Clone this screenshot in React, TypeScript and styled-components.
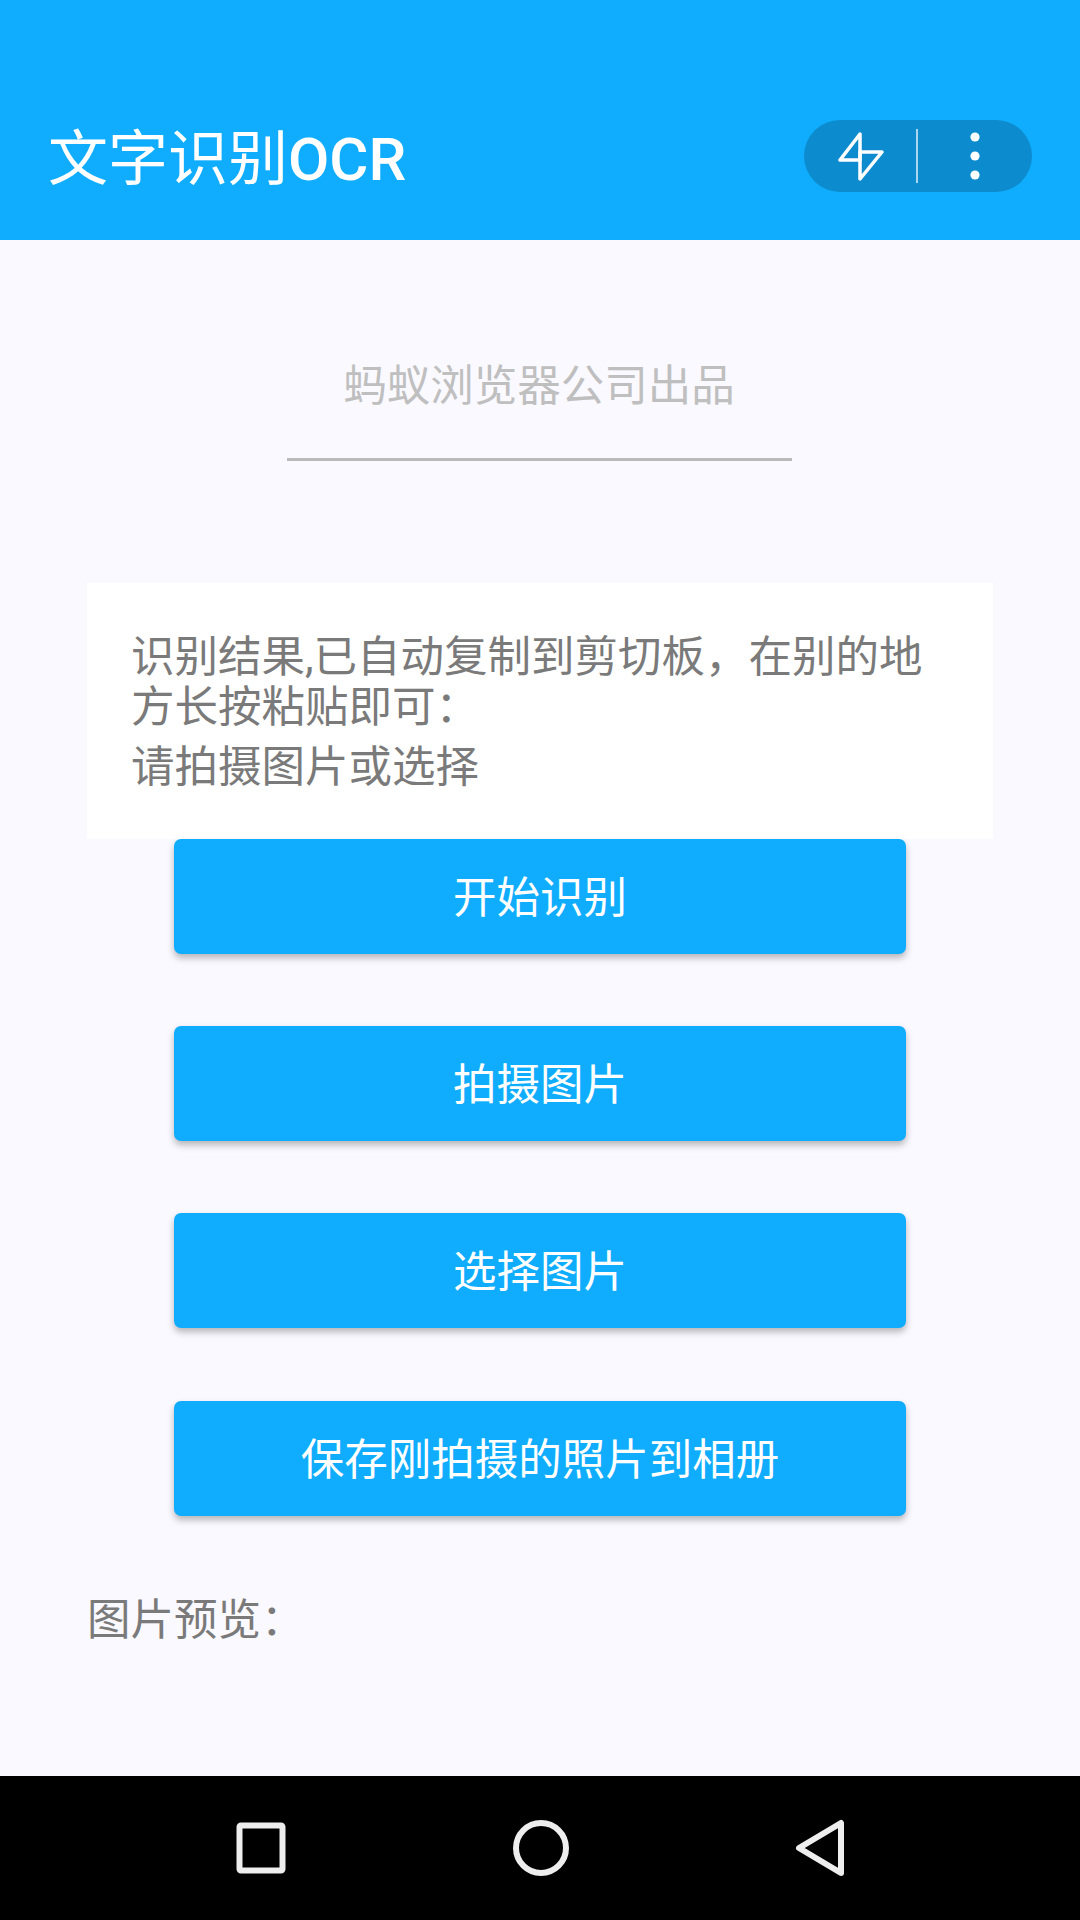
import styled, { createGlobalStyle } from 'styled-components';

const GlobalStyle = createGlobalStyle`
  html, body {
    margin: 0;
    padding: 0;
    background: #faf9ff;
  }
  body {
    font-family: Roboto, "Noto Sans CJK SC", sans-serif;
  }
`;

const Page = styled.div`
  width: 1080px;
  height: 1920px;
  display: flex;
  flex-direction: column;
  overflow: hidden;
`;

const Header = styled.header`
  height: 240px;
  flex: none;
  box-sizing: border-box;
  background: #10adff;
  padding: 120px 48px 0 48px;
  display: flex;
  justify-content: space-between;
  align-items: flex-start;
`;

const Title = styled.h1`
  margin: 0;
  height: 80px;
  font-size: 60px;
  line-height: 80px;
  font-weight: 400;
  color: #fff;
`;

const TitleLatin = styled.span`
  font-weight: 500;
`;

const Capsule = styled.div`
  width: 228px;
  height: 72px;
  border-radius: 36px;
  background: #0d8bcf;
  display: flex;
  align-items: center;
`;

const CapsuleSlot = styled.div`
  flex: 1;
  height: 100%;
  display: flex;
  align-items: center;
  justify-content: center;
`;

const CapsuleDivider = styled.div`
  width: 1.5px;
  height: 54px;
  margin-left: -2px;
  background: rgba(255, 255, 255, 0.65);
`;

const Main = styled.main`
  flex: 1;
  display: flex;
  flex-direction: column;
  align-items: center;
  padding-top: 114px;
`;

const Vendor = styled.div`
  width: 505px;
  height: 107px;
  margin-left: -2px;
  box-sizing: border-box;
  border-bottom: 3px solid #bababa;
  text-align: center;
  font-size: 43.5px;
  line-height: 66px;
  color: #bfbfbf;
`;

const ResultCard = styled.section`
  width: 906px;
  height: 256px;
  margin-top: 122px;
  box-sizing: border-box;
  padding: 50px 44px 0;
  background: #fff;
  color: #7a7a7a;
  font-size: 43.5px;
  line-height: 50px;
`;

const ResultHint = styled.p`
  margin: 0;
`;

const ResultValue = styled.p`
  margin: 10px 0 0;
`;

const ButtonList = styled.div`
  display: flex;
  flex-direction: column;
  gap: 72.2px;
`;

const ActionButton = styled.button`
  width: 732px;
  height: 115px;
  border: 0;
  padding: 0 0 4px;
  border-radius: 7px;
  background: #10adff;
  color: #fff;
  font: inherit;
  font-size: 43.5px;
  box-shadow: 0 4px 7px rgba(0, 0, 0, 0.28);
`;

const PreviewLabel = styled.div`
  align-self: flex-start;
  margin: 75px 0 0 87px;
  font-size: 43.5px;
  line-height: 60px;
  color: #7a7a7a;
`;

const NavBar = styled.nav`
  height: 144px;
  flex: none;
  box-sizing: border-box;
  background: #000;
  display: flex;
  align-items: center;
  justify-content: space-between;
  padding: 0 220px 0 221px;
`;

const NavSlot = styled.div`
  width: 80px;
  height: 60px;
  display: flex;
  align-items: center;
  justify-content: center;
`;

function FlashIcon() {
  return (
    <svg width="46" height="49" viewBox="0 0 46 49" fill="none" stroke="#fff" strokeWidth="3.5" strokeLinejoin="round">
      <path d="M22 2 L2 28 H22 Z" />
      <path d="M22 20 H44 L22 47 Z" />
    </svg>
  );
}

function MoreIcon() {
  return (
    <svg width="12" height="52" viewBox="0 0 12 52" fill="#fff">
      <circle cx="6" cy="7" r="4.6" />
      <circle cx="6" cy="26" r="4.6" />
      <circle cx="6" cy="45" r="4.6" />
    </svg>
  );
}

function SquareIcon() {
  return (
    <svg width="50" height="52" viewBox="0 0 50 52" fill="none" stroke="#eee" strokeWidth="6" strokeLinejoin="round">
      <rect x="3.5" y="3.5" width="43" height="45" rx="1.5" />
    </svg>
  );
}

function CircleIcon() {
  return (
    <svg width="56" height="56" viewBox="0 0 56 56" fill="none" stroke="#eee" strokeWidth="6">
      <circle cx="28" cy="28" r="25" />
    </svg>
  );
}

function BackIcon() {
  return (
    <svg width="50" height="58" viewBox="0 0 50 58" fill="none" stroke="#eee" strokeWidth="6" strokeLinejoin="round">
      <path d="M46 4 V54 L4 29 Z" />
    </svg>
  );
}

const actions = ['开始识别', '拍摄图片', '选择图片', '保存刚拍摄的照片到相册'];

export default function App() {
  return (
    <Page>
      <GlobalStyle />
      <Header>
        <Title>
          文字识别<TitleLatin>OCR</TitleLatin>
        </Title>
        <Capsule>
          <CapsuleSlot>
            <FlashIcon />
          </CapsuleSlot>
          <CapsuleDivider />
          <CapsuleSlot>
            <MoreIcon />
          </CapsuleSlot>
        </Capsule>
      </Header>
      <Main>
        <Vendor>蚂蚁浏览器公司出品</Vendor>
        <ResultCard>
          <ResultHint>识别结果,已自动复制到剪切板，在别的地方长按粘贴即可：</ResultHint>
          <ResultValue>请拍摄图片或选择</ResultValue>
        </ResultCard>
        <ButtonList>
          {actions.map((label) => (
            <ActionButton key={label}>{label}</ActionButton>
          ))}
        </ButtonList>
        <PreviewLabel>图片预览：</PreviewLabel>
      </Main>
      <NavBar>
        <NavSlot>
          <SquareIcon />
        </NavSlot>
        <NavSlot>
          <CircleIcon />
        </NavSlot>
        <NavSlot>
          <BackIcon />
        </NavSlot>
      </NavBar>
    </Page>
  );
}
